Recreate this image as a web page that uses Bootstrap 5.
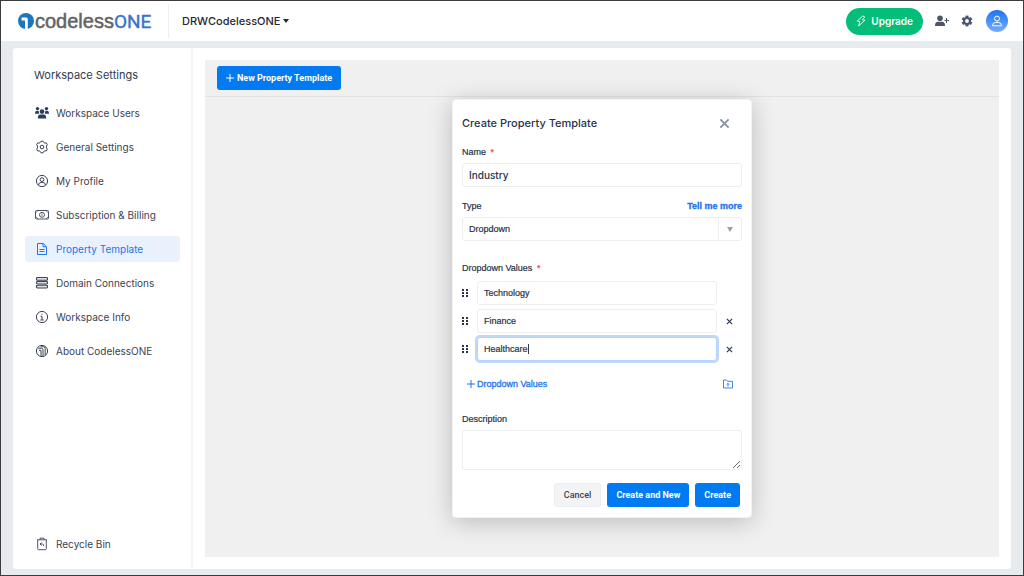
<!DOCTYPE html>
<html lang="en">
<head>
<meta charset="utf-8">
<meta name="viewport" content="width=device-width, initial-scale=1">
<title>Workspace Settings - CodelessONE</title>
<link href="https://cdn.jsdelivr.net/npm/bootstrap@5.3.0/dist/css/bootstrap.min.css" rel="stylesheet">
<style>
  body { font-family: Inter, "Liberation Sans", sans-serif; font-size: 10px; line-height: 16px; color: #2f3a4f; background: #e7ebee; border: 1px solid #3c3c40; }
  svg { display: block; flex: none; }
  .topbar { height: 40px; padding: 0 15px 0 17px; background: #fff; }
  .brand { width: 151px; height: 34px; border-right: 1px solid #eceef0; font: 20px/24px "Liberation Sans", sans-serif; color: #626366; -webkit-text-stroke: .5px #626366; text-decoration: none; gap: 1px; }
  .brand b { font: 19px/24px Roboto, sans-serif; color: #3a73c8; -webkit-text-stroke: .4px #3a73c8; }
  .workspace-btn { font-size: 11px; line-height: 16px; font-weight: 500; color: #1f2733; margin-left: 13px; padding: 0; gap: 3px; border: 0; background: none; }
  .upgrade { height: 27px; padding: 0 10px; gap: 5px; background: #04bd78; color: #fff; font-size: 10px; font-weight: 600; border: 0; }
  .icon-btn { border: 0; padding: 0; background: none; color: #4b566b; }
  .avatar { width: 22px; height: 22px; margin-left: 13px; color: #fff; background: linear-gradient(#1d74f2, #78adfb); }
  .shell { margin: 7px 12px 6px; background: #fff; border-radius: 3px; }
  .side { width: 180px; border-right: 2px solid #f3f4f5; padding: 19px 11px 12px 12px; }
  .side h1 { font-size: 11px; line-height: 16px; font-weight: 400; margin: 0 0 17px 9px; color: #2f3a4f; }
  .side .nav-link { height: 26px; margin-bottom: 8px; padding: 0 10px; gap: 7px; color: #3b4353; border-radius: 4px; font-size: 10px; }
  .side .nav-link.active { background: #e8f1fc; color: #1f74ee; }
  .panel { margin: 12px; background: #f0f0f0; }
  .toolbar { padding: 6px 12px; border-bottom: 1px solid #e1e2e3; }
  .act { height: 24px; padding: 0 9px; border: 0; border-radius: 3px; font: 700 9px/24px Roboto, sans-serif; background: #017af2; color: #fff; }
  .toolbar .act { gap: 3px; }
  .act:hover { background: #0069d8; color: #fff; }
  .act.cancel { background: #f2f4f6; color: #3b4353; font-weight: 500; line-height: 22px; border: 1px solid #eceef1; }
  .dialog { width: 300px; margin-top: 2px; padding: 11px 9px 10px; background: #fff; border: 1px solid #f2f2f2; border-radius: 4px; box-shadow: 0 4px 24px rgba(0,0,0,.22); font-family: "Liberation Sans", sans-serif; }
  .dialog h2 { font-family: Inter, sans-serif; font-size: 11px; line-height: 24px; font-weight: 500; margin: 0; color: #27334a; }
  .dlg-head { margin-bottom: 9px; padding-right: 12px; }
  .dlg-head button { color: #8791a2; }
  .dialog label, .lbl { font-size: 9px; line-height: 16px; display: block; margin-bottom: 3px; color: #27334a; -webkit-text-stroke: .2px; }
  .dialog .lbl { margin-bottom: 5px; }
  .req { color: #f0464c; margin-left: 2px; }
  .group-name { margin-bottom: 11px; }
  .group-type { margin-bottom: 19px; }
  .field { height: 24px; padding: 0 6px; font-size: 9px; line-height: 16px; color: #27334a; -webkit-text-stroke: .2px; border: 1px solid #eceef0; border-radius: 3px; background: #fff; }
  .field.big { font-family: Inter, sans-serif; font-size: 10px; font-weight: 500; -webkit-text-stroke: 0; }
  textarea.field { height: 40px; display: block; }
  .field.editing { border-color: #b9d4fb; box-shadow: 0 0 0 2px #bfd7fb; }
  .pick { appearance: none; }
  .arrow { width: 23px; height: 22px; top: 1px; right: 1px; border-left: 1px solid #eceef0; pointer-events: none; }
  .caret { width: 1px; height: 10px; left: 51px; top: 7px; background: #2f3a4f; }
  .values { gap: 4px; }
  .grip { margin-right: 8px; }
  .rm { width: 25px; color: #27334a; }
  .rm svg { margin: auto; }
  .below { margin: 15px 0 19px; padding: 0 9px 0 5px; }
  .foot { margin-top: 13px; padding-right: 2px; gap: 6px; }
  .plain { border: 0; background: none; padding: 0; }
  .linkish { color: #1b74ee; font: 400 9px/16px "Liberation Sans", sans-serif; -webkit-text-stroke: .3px; text-decoration: none; gap: 2px; }
</style>
</head>
<body class="min-vh-100 d-flex flex-column">
<svg width="0" height="0" class="position-absolute">
  <symbol id="grip" viewBox="0 0 7 9"><path fill="#27334a" d="M0 0h2v2H0zM4 0h2v2H4zM0 3h2v2H0zM4 3h2v2H4zM0 6h2v2H0zM4 6h2v2H4z"/></symbol>
  <symbol id="cross" viewBox="0 0 8 8"><path d="M1 1l6 6M7 1L1 7" stroke="currentColor" stroke-width="1.3" fill="none"/></symbol>
</svg>

<header class="topbar d-flex align-items-center">
  <a href="#" class="brand d-flex align-items-center">
    <svg width="16" height="16" viewBox="0 0 16 16"><circle cx="8" cy="8" r="8" fill="#1c76bd"/><path d="M3.600 4.500h4.600q1.600 0 1.600 1.600V16H7V7.600H3.600z" fill="#fff"/></svg>
    <span>codeless<b>ONE</b></span>
  </a>
  <button class="workspace-btn d-flex align-items-center" type="button">DRWCodelessONE
    <svg width="6" height="4" viewBox="0 0 6 4"><path d="M0 0h6L3 4z" fill="#1f2733"/></svg></button>
  <button class="upgrade rounded-pill d-flex align-items-center ms-auto" type="button">
    <svg width="10" height="12" viewBox="0 0 10 12" fill="none" stroke="#fff" stroke-width=".9" stroke-linejoin="round"><path d="M6.800 1L1.200 6.200l2.600.3L2.600 11 9 5.200 6.200 4.900 8.800 2z"/></svg>Upgrade</button>
  <button class="icon-btn ms-2 ps-1" type="button" aria-label="Invite user"><svg width="14" height="12" viewBox="0 0 14 12" fill="currentColor"><circle cx="5" cy="3.200" r="2.800"/><path d="M0 11q0-4.200 3-4.200h4q3 0 3 4.200zM11 3h1v2h2v1h-2v2h-1V6H9.500V5H11z"/></svg></button>
  <button class="icon-btn ms-2 ps-1" type="button" aria-label="Settings"><svg width="12" height="12" viewBox="0 0 12 12"><g fill="currentColor"><path d="M4.500.6h3v10.800h-3z"/><path d="M4.500.6h3v10.800h-3z" transform="rotate(60 6 6)"/><path d="M4.500.6h3v10.800h-3z" transform="rotate(120 6 6)"/><circle cx="6" cy="6" r="4"/></g><circle cx="6" cy="6" r="1.900" fill="#fff"/></svg></button>
  <button class="icon-btn avatar rounded-circle d-flex align-items-center justify-content-center" type="button" aria-label="Account"><svg width="12" height="12" viewBox="0 0 12 12" fill="none" stroke="#fff"><circle cx="6" cy="3.600" r="2.500"/><path d="M1.500 10.800q0-3.300 3-3.300h3q3 0 3 3.300z" stroke-linejoin="round"/></svg></button>
</header>

<div class="shell flex-grow-1 d-flex">
  <aside class="side d-flex flex-column">
    <h1>Workspace Settings</h1>
    <nav class="nav flex-column flex-grow-1 flex-nowrap">
      <a class="nav-link d-flex align-items-center" href="#"><svg width="14" height="14" viewBox="0 0 14 14" fill="#2c3a5c"><circle cx="2.500" cy="2.600" r="1.700"/><circle cx="11.500" cy="2.600" r="1.700"/><circle cx="7" cy="5.600" r="2.300"/><path d="M0 7.800q0-3 2-3h1.500l.8 3zM14 7.800q0-3-2-3h-1.500l-.8 3zM2.800 12.600q0-4 2.400-4h3.600q2.400 0 2.400 4z"/></svg>Workspace Users</a>
      <a class="nav-link d-flex align-items-center" href="#"><svg width="14" height="14" viewBox="0 0 14 14" fill="none" stroke="#3b4353"><path d="M5.200 2.500L6 1.200h2l.8 1.300 1 .5 1.500-.1 1 1.800-.8 1.300v1.900l.8 1.300-1 1.800-1.500-.1-1 .5L8 12.800H6l-.8-1.400-1-.5-1.500.1-1-1.800.8-1.300V6l-.8-1.300 1-1.800 1.500.1z" stroke-linejoin="round"/><circle cx="7" cy="7" r="1.800"/></svg>General Settings</a>
      <a class="nav-link d-flex align-items-center" href="#"><svg width="14" height="14" viewBox="0 0 14 14" fill="none" stroke="#3b4353"><circle cx="7" cy="7" r="5.600"/><circle cx="7" cy="5.600" r="1.900"/><path d="M3.500 11q.3-2.500 2.500-2.500h2q2.200 0 2.500 2.500"/></svg>My Profile</a>
      <a class="nav-link d-flex align-items-center" href="#"><svg width="14" height="14" viewBox="0 0 14 14" fill="none" stroke="#3b4353" stroke-width=".9"><rect x=".5" y="2.500" width="13" height="8.500" rx="1"/><circle cx="7" cy="6.800" r="2.500"/><path d="M7 5.400v2.800M.5 5l2.500-2.500M11 2.500L13.500 5M.5 8.500L3 11M11 11l2.500-2.500" stroke-width=".7"/></svg>Subscription &amp; Billing</a>
      <a class="nav-link active d-flex align-items-center" href="#" aria-current="page"><svg width="14" height="14" viewBox="0 0 14 14" fill="none" stroke="#1f74ee"><path d="M2.500 1.500h5.700l3.300 3.300v7.700h-9z" stroke-linejoin="round"/><path d="M8 1.500v3.200h3.300M4.500 7.500h5M4.500 9.500h5"/></svg>Property Template</a>
      <a class="nav-link d-flex align-items-center" href="#"><svg width="14" height="14" viewBox="0 0 14 14" fill="#dcdfe5" stroke="#3b4353" stroke-width="1.100"><rect x="1.500" y="1.500" width="11" height="2.800" rx=".9"/><rect x="1.500" y="5.500" width="11" height="2.500" rx=".9"/><rect x="1.500" y="9.200" width="11" height="2.800" rx=".9"/></svg>Domain Connections</a>
      <a class="nav-link d-flex align-items-center" href="#"><svg width="14" height="14" viewBox="0 0 14 14" fill="none" stroke="#3b4353"><circle cx="7" cy="7" r="5.600"/><path d="M5.600 6.300H7V10M5.400 10h3.200M6.500 4.200h1"/></svg>Workspace Info</a>
      <a class="nav-link d-flex align-items-center" href="#"><svg width="14" height="14" viewBox="0 0 14 14" fill="none" stroke="#3b4353"><circle cx="7" cy="7" r="5.600"/><path d="M3.300 4.300h3.200q1.500 0 1.500 1.500v6.500M4 6.300h2v6M5.500 2.800h3q1.700 0 1.700 1.700v6.500"/></svg>About CodelessONE</a>
      <a class="nav-link d-flex align-items-center mt-auto mb-0" href="#"><svg width="14" height="14" viewBox="0 0 14 14" fill="none" stroke="#3b4353" stroke-width=".9"><path d="M2 2.800h10M5 2.600V1.200h4v1.400M2.700 3v8.700q0 1 1 1h6.600q1 0 1-1V3M6.500 5.500L5 7l1.500 1.500M5 7h2.500q1.200 0 1.200 2"/></svg>Recycle Bin</a>
    </nav>
  </aside>

  <main class="panel flex-grow-1 d-flex flex-column">
    <div class="toolbar">
      <button class="btn act d-flex align-items-center" type="button"><svg width="8" height="8" viewBox="0 0 8 8"><path d="M4 0v8M0 4h8" stroke="#fff" fill="none"/></svg>New Property Template</button>
    </div>
    <form class="dialog mx-auto" role="dialog" aria-labelledby="dlgTitle">
      <div class="dlg-head d-flex justify-content-between align-items-center">
        <h2 id="dlgTitle">Create Property Template</h2>
        <button class="plain" type="button" aria-label="Close"><svg width="11" height="11"><use href="#cross"/></svg></button>
      </div>
      <div class="group-name">
        <label for="pname">Name <span class="req">*</span></label>
        <input id="pname" class="field big w-100 d-block" type="text" value="Industry">
      </div>
      <div class="group-type">
        <div class="d-flex justify-content-between"><label for="ptype">Type</label><a href="#" class="linkish fw-bold">Tell me more</a></div>
        <div class="position-relative">
          <select id="ptype" class="field pick w-100 d-block"><option>Dropdown</option></select>
          <span class="arrow position-absolute d-flex align-items-center justify-content-center"><svg width="6" height="5" viewBox="0 0 6 5"><path d="M0 0h6L3 5z" fill="#9aa1ac"/></svg></span>
        </div>
      </div>
      <div class="lbl">Dropdown Values <span class="req">*</span></div>
      <div class="values d-flex flex-column">
        <div class="d-flex align-items-center"><svg class="grip" width="7" height="9"><use href="#grip"/></svg><input class="field flex-grow-1" type="text" value="Technology" aria-label="Value 1"><span class="rm"></span></div>
        <div class="d-flex align-items-center"><svg class="grip" width="7" height="9"><use href="#grip"/></svg><input class="field flex-grow-1" type="text" value="Finance" aria-label="Value 2"><button class="plain rm" type="button" aria-label="Remove Finance"><svg width="7" height="7"><use href="#cross"/></svg></button></div>
        <div class="d-flex align-items-center"><svg class="grip" width="7" height="9"><use href="#grip"/></svg><div class="position-relative flex-grow-1"><input class="field editing w-100 d-block" type="text" value="Healthcare" aria-label="Value 3"><span class="caret position-absolute"></span></div><button class="plain rm" type="button" aria-label="Remove Healthcare"><svg width="7" height="7"><use href="#cross"/></svg></button></div>
      </div>
      <div class="below d-flex justify-content-between align-items-center">
        <button class="plain linkish d-flex align-items-center" type="button"><svg width="8" height="8" viewBox="0 0 8 8"><path d="M4 0v8M0 4h8" stroke="#1b74ee" fill="none"/></svg>Dropdown Values</button>
        <button class="plain" type="button" aria-label="Import values"><svg width="10" height="10" viewBox="0 0 10 10" fill="none" stroke="#3f83ee"><path d="M.5 9V1h3l1 1.300h5V9z" stroke-linejoin="round"/><path d="M5 7.500v-3M3.600 5.700L5 4.300l1.400 1.400"/></svg></button>
      </div>
      <label for="pdesc">Description</label>
      <textarea id="pdesc" class="field w-100"></textarea>
      <div class="foot d-flex justify-content-end">
        <button class="btn act cancel" type="button">Cancel</button>
        <button class="btn act" type="button">Create and New</button>
        <button class="btn act" type="submit">Create</button>
      </div>
    </form>
  </main>
</div>
<script src="https://cdn.jsdelivr.net/npm/bootstrap@5.3.0/dist/js/bootstrap.bundle.min.js"></script>
</body>
</html>
